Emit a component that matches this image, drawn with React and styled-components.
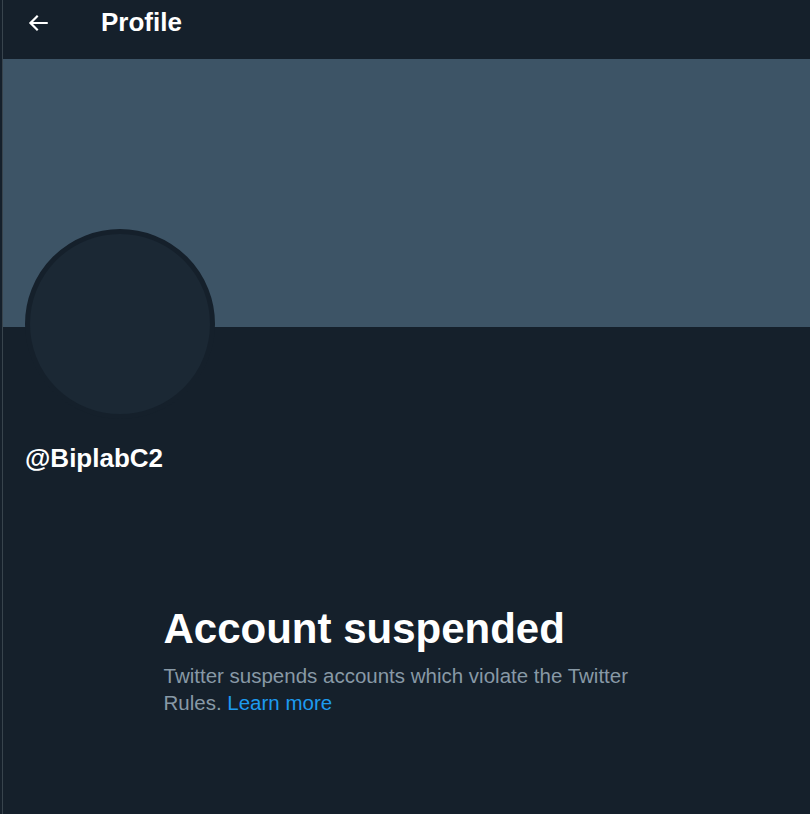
import React from 'react';
import styled, { createGlobalStyle } from 'styled-components';

const GlobalStyle = createGlobalStyle`
  html, body {
    margin: 0;
    padding: 0;
    background: #15202b;
  }
  body {
    font-family: "Liberation Sans", Arial, sans-serif;
    -webkit-font-smoothing: antialiased;
  }
`;

const Page = styled.div`
  min-height: 814px;
  padding-left: 2px;
  background: #15202b;
`;

const Column = styled.main`
  min-height: 814px;
  border-left: 1px solid #38444d;
  display: flex;
  flex-direction: column;
`;

const Header = styled.header`
  height: 59px;
  display: flex;
  align-items: center;
  padding: 0 0 14px 22px;
  box-sizing: border-box;
`;

const BackButton = styled.button`
  width: 76px;
  height: 40px;
  padding: 0;
  border: none;
  background: transparent;
  display: flex;
  align-items: center;
  justify-content: flex-start;
  cursor: pointer;
  svg {
    width: 26px;
    height: 26px;
    fill: #ffffff;
  }
`;

const Title = styled.h2`
  margin: 0;
  font-size: 26px;
  font-weight: 700;
  color: #ffffff;
`;

const Banner = styled.div`
  height: 268px;
  background: #3d5466;
`;

const Info = styled.section`
  padding: 0 22px;
`;

const Avatar = styled.div`
  width: 190px;
  height: 190px;
  margin-top: -98px;
  border-radius: 50%;
  box-sizing: border-box;
  border: 5px solid #15202b;
  background: #1b2834;
`;

const Handle = styled.div`
  margin-top: 24px;
  font-size: 26px;
  font-weight: 700;
  color: #ffffff;
`;

const Empty = styled.div`
  width: 486px;
  margin: 130px auto 0;
`;

const EmptyTitle = styled.h1`
  margin: 0;
  font-size: 42px;
  line-height: 50px;
  font-weight: 700;
  color: #ffffff;
`;

const EmptyText = styled.p`
  margin: 8px 0 0;
  font-size: 20.5px;
  line-height: 27px;
  color: #8899a6;
`;

const Link = styled.a`
  color: #1d9bf0;
  text-decoration: none;
`;

const App = () => {
  return (
    <Page>
      <GlobalStyle />
      <Column>
        <Header>
          <BackButton aria-label="Back">
            <svg viewBox="0 0 24 24">
              <path d="M7.414 13l5.043 5.04-1.414 1.42L3.586 12l7.457-7.46 1.414 1.42L7.414 11H21v2H7.414z" />
            </svg>
          </BackButton>
          <Title>Profile</Title>
        </Header>
        <Banner />
        <Info>
          <Avatar />
          <Handle>@BiplabC2</Handle>
        </Info>
        <Empty>
          <EmptyTitle>Account suspended</EmptyTitle>
          <EmptyText>
            Twitter suspends accounts which violate the Twitter Rules. <Link href="#">Learn more</Link>
          </EmptyText>
        </Empty>
      </Column>
    </Page>
  );
};

export default App;
